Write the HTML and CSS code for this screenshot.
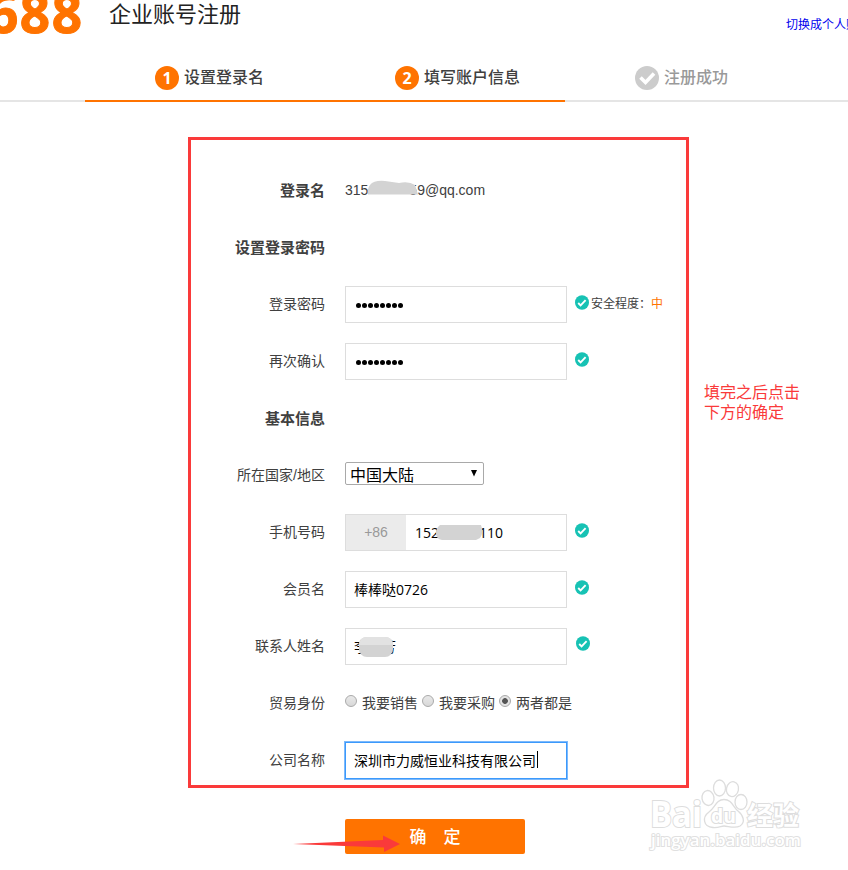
FILE: index.html
```html
<!DOCTYPE html>
<html lang="zh-Hans">
<head>
  <meta charset="UTF-8">
  <title>企业账号注册</title>
  <link rel="stylesheet" href="styles.css">
</head>
<body>

  <svg class="defs" width="0" height="0">
    <symbol id="ok" viewBox="0 0 14 15">
      <ellipse cx="7" cy="7.5" rx="7" ry="7.3" fill="#17c2b4"/>
      <path d="M3.2 8l2.4 2.4 5-5.2" fill="none" stroke="#fff" stroke-width="1.9"/>
    </symbol>
  </svg>

  <!-- header -->
  <div class="header">
    <svg class="logo" width="90" height="50">
      <text x="-12" y="32.500" textLength="94">688</text>
    </svg>
    <h1>企业账号注册</h1>
    <a class="switch" href="#">切换成个人账</a>
  </div>

  <!-- steps -->
  <div class="steps">
    <div class="step on"><i>1</i><span>设置登录名</span></div>
    <div class="step on"><i>2</i><span>填写账户信息</span></div>
    <div class="step">
      <i><svg width="24" height="24"><path d="M5.5 11.5l5 5 8.5-9" fill="none" stroke="#fff" stroke-width="3.6"/></svg></i>
      <span>注册成功</span>
    </div>
  </div>

  <div class="main">
    <!-- form -->
    <div class="form-box">
      <div class="row">
        <label class="bold">登录名</label>
        <div class="static">315<span class="gap-mail"></span>59@qq.com
          <svg class="mask mask-mail" width="54" height="16"><path d="M1 14.500Q0 9 3 5Q7 0 18 1L32 3Q42 1 48 5L51 14.500z"/></svg>
        </div>
      </div>
      <div class="row"><label class="bold">设置登录密码</label></div>
      <div class="row">
        <label>登录密码</label>
        <div class="input pwd"><b></b><b></b><b></b><b></b><b></b><b></b><b></b><b></b></div>
        <svg class="ok"><use href="#ok"/></svg>
        <span class="level">安全程度：<em>中</em></span>
      </div>
      <div class="row">
        <label>再次确认</label>
        <div class="input pwd"><b></b><b></b><b></b><b></b><b></b><b></b><b></b><b></b></div>
        <svg class="ok"><use href="#ok"/></svg>
      </div>
      <div class="row"><label class="bold">基本信息</label></div>
      <div class="row">
        <label>所在国家/地区</label>
        <div class="select"><span>中国大陆</span><svg width="8" height="7"><path d="M1 0h6L4 6.500z"/></svg></div>
      </div>
      <div class="row">
        <label>手机号码</label>
        <div class="input phone">
          <span class="prefix">+86</span>
          <span class="num">152<span class="gap-phone"></span>110</span>
          <svg class="mask mask-phone" width="50" height="16"><path d="M5 0H46Q49 8 45 13L41 15H7Q1 14 1 8Q1 3 5 0z"/></svg>
        </div>
        <svg class="ok"><use href="#ok"/></svg>
      </div>
      <div class="row">
        <label>会员名</label>
        <div class="input text">棒棒哒0726</div>
        <svg class="ok"><use href="#ok"/></svg>
      </div>
      <div class="row">
        <label>联系人姓名</label>
        <div class="input text">李<span class="gap-name"></span>芳
          <svg class="mask mask-name" width="34" height="21"><rect width="34" height="20" rx="8"/><path class="light" d="M0 8Q0 0 8 0H26Q34 0 34 8z"/></svg>
        </div>
        <svg class="ok ok-name"><use href="#ok"/></svg>
      </div>
      <div class="row">
        <label>贸易身份</label>
        <div class="radios">
          <span class="radio"></span><span>我要销售</span>
          <span class="radio"></span><span>我要采购</span>
          <span class="radio checked"></span><span>两者都是</span>
        </div>
      </div>
      <div class="row">
        <label>公司名称</label>
        <div class="input text focus">深圳市力威恒业科技有限公司<span class="caret"></span></div>
      </div>
    </div>

    <p class="note">填完之后点击<br>下方的确定</p>
  </div>

  <div class="footer">
    <div class="submit">确<span></span>定
      <svg class="arrow" width="110" height="20"><path d="M0 9L90 5V.500L107 9L91 17V12.500z"/></svg>
    </div>
  </div>

  <svg class="watermark" width="160" height="80">
    <g class="outline">
      <text class="bai" x="2" y="49.500" textLength="52" lengthAdjust="spacingAndGlyphs">Bai</text>
      <ellipse cx="60" cy="21" rx="6" ry="7.500" transform="rotate(-8 60 21)"/>
      <ellipse cx="71.500" cy="11" rx="6" ry="8"/>
      <ellipse cx="84.500" cy="12" rx="6" ry="7.500" transform="rotate(12 84 12)"/>
      <ellipse cx="93" cy="25" rx="6" ry="7.500"/>
      <path d="M76 22.500C68 22.500 67 31 61 35C54 40 55 50 65 50.500C71 51 73 49 76 49C80 49 87 52 92 49C98 45 95 38 90 34C85 30 84 22.500 76 22.500z"/>
      <text class="du" x="63" y="46" textLength="25" lengthAdjust="spacingAndGlyphs">du</text>
      <text class="jy" x="99" y="47.500" textLength="52">经验</text>
    </g>
    <text class="url" x="3" y="69" textLength="150" lengthAdjust="spacingAndGlyphs">jingyan.baidu.com</text>
  </svg>

</body>
</html>
```
FILE: styles.css
```css
* {
  box-sizing: border-box;
}

body {
  position: relative;
  margin: 0;
  width: 848px;
  height: 870px;
  overflow: hidden;
  background: #fff;
  color: #404040;
  font: 14px "Liberation Sans", "Noto Sans CJK SC", sans-serif;
}

.defs {
  position: absolute;
}

/* header */
.header {
  display: flex;
  height: 50px;
  white-space: nowrap;
}

.logo {
  flex: none;
  margin-right: 19px;
}

.logo text {
  font: bold 53px "Open Sans", sans-serif;
  fill: #ff7300;
  stroke: #ff7300;
  stroke-width: 1;
}

h1 {
  margin: 0;
  width: 677px;
  flex: none;
  font-size: 22px;
  font-weight: normal;
  line-height: 30px;
  color: #222;
}

.switch {
  flex: none;
  font-size: 12px;
  line-height: 50px;
  color: #00e;
  text-decoration: none;
}

/* steps */
.steps {
  display: flex;
  height: 52px;
  padding-left: 85px;
  background: linear-gradient(#e5e5e5, #e5e5e5) 0 100% / 100% 2px no-repeat;
}

.step {
  display: flex;
  align-items: center;
  width: 240px;
  padding-left: 70px;
  border-bottom: 2px solid transparent;
  font-size: 16px;
  font-weight: 500;
  color: #999;
}

.step i {
  width: 24px;
  height: 24px;
  margin: 5px 5px 0 0;
  border-radius: 50%;
  background: #ccc;
  color: #fff;
  font: bold 16px/24px "Open Sans", sans-serif;
  text-align: center;
}

.step span {
  padding-top: 2px;
}

.step svg {
  display: block;
}

.step.on {
  border-color: #ff7300;
  color: #404040;
}

.step.on i {
  background: #ff7300;
}

/* form */
.main {
  display: flex;
  padding: 35px 0 0 188px;
}

.form-box {
  display: flex;
  flex-direction: column;
  gap: 20px;
  width: 501px;
  height: 651px;
  padding-top: 32px;
  border: 3px solid #fa3a3a;
}

.row {
  display: flex;
  align-items: center;
  height: 37px;
  flex: none;
  white-space: nowrap;
}

label {
  width: 134px;
  margin-right: 20px;
  padding-bottom: 3px;
  text-align: right;
}

label.bold {
  font-size: 15px;
  font-weight: bold;
}

.static {
  position: relative;
  padding-bottom: 2px;
}

.gap-mail {
  display: inline-block;
  width: 41px;
}

.mask {
  position: absolute;
  fill: #d3d3d3;
}

.mask .light {
  fill: #e2e2e2;
}

.mask-mail {
  left: 22px;
  top: -2px;
}

.input {
  position: relative;
  display: flex;
  align-items: center;
  width: 222px;
  height: 37px;
  padding-left: 9px;
  border: 1px solid #ddd;
  color: #000;
  font-family: "Open Sans", "Noto Sans CJK SC", sans-serif;
}

.text {
  padding: 0 0 2px 8px;
}

.pwd {
  gap: 1px;
  padding-left: 10px;
}

.pwd b {
  width: 5px;
  height: 5px;
  margin-top: 2px;
  border-radius: 50%;
  background: #000;
}

.ok {
  width: 14px;
  height: 15px;
  margin: -5px 2px 0 8px;
}

.ok-name {
  margin-left: 9px;
  margin-top: -7px;
}

.level {
  font-size: 12px;
  margin-top: -4px;
}

.level em {
  font-style: normal;
  color: #ff7300;
}

.select {
  display: flex;
  align-items: center;
  justify-content: space-between;
  width: 139px;
  height: 23px;
  margin-top: -4px;
  padding: 0 5px 0 4px;
  border: 1px solid #a9a9a9;
  border-radius: 2px;
  color: #000;
  font-size: 16px;
}

.select svg {
  margin-bottom: 1px;
}

.phone {
  padding-left: 0;
}

.prefix {
  width: 60px;
  height: 35px;
  background: #ebebeb;
  color: #999;
  font: 14px/35px "Liberation Sans", sans-serif;
  text-align: center;
}

.num {
  margin-left: 9px;
}

.gap-phone {
  display: inline-block;
  width: 40px;
}

.mask-phone {
  left: 89px;
  top: 10px;
}

.gap-name {
  width: 14px;
}

.mask-name {
  left: 13px;
  top: 8px;
}

.radios {
  display: flex;
  align-items: center;
}

.radios span:not(.radio) {
  padding-bottom: 3px;
}

.radio {
  width: 12px;
  height: 12px;
  margin: -5px 5px 0 4px;
  border: 1px solid #aaa;
  border-radius: 50%;
  background: linear-gradient(#e9e9e9, #d8d8d8);
}

.radio:first-child {
  margin-left: 0;
}

.checked {
  background: radial-gradient(#555 0 2.5px, #e4e4e4 3.2px);
}

.focus {
  border: 1px solid #3b99fc;
  box-shadow: 0 0 0 1px #7db9fb;
}

.caret {
  width: 1px;
  height: 17px;
  margin-left: 1px;
  background: #000;
}

.note {
  margin: 246px 0 0 15px;
  color: #fa3a3a;
  font-size: 16px;
  line-height: 20px;
  white-space: nowrap;
}

/* submit */
.footer {
  padding: 31px 0 0 345px;
}

.submit {
  position: relative;
  display: flex;
  align-items: center;
  justify-content: center;
  width: 180px;
  height: 35px;
  padding-bottom: 2px;
  border-radius: 2px;
  background: #ff7300;
  color: #fff;
  font-size: 17px;
  font-weight: 500;
}

.submit span {
  width: 17px;
}

.arrow {
  position: absolute;
  left: -52px;
  top: 16px;
  fill: #fa3a3a;
}

/* watermark */
.watermark {
  position: absolute;
  left: 648px;
  top: 777px;
}

.outline {
  fill: #fff;
  stroke: #ddd;
  stroke-width: 1.3;
}

.outline text {
  stroke-width: 2;
  paint-order: stroke;
}

.bai {
  font: bold 35px "Open Sans", sans-serif;
}

.du {
  font: bold 19px "Open Sans", sans-serif;
}

.jy {
  font: bold 26px "Noto Sans CJK SC", sans-serif;
}

.url {
  font: 600 17px "Open Sans", sans-serif;
  fill: #fff;
  stroke: #e0e0e0;
  stroke-width: 2;
  paint-order: stroke;
}
```
